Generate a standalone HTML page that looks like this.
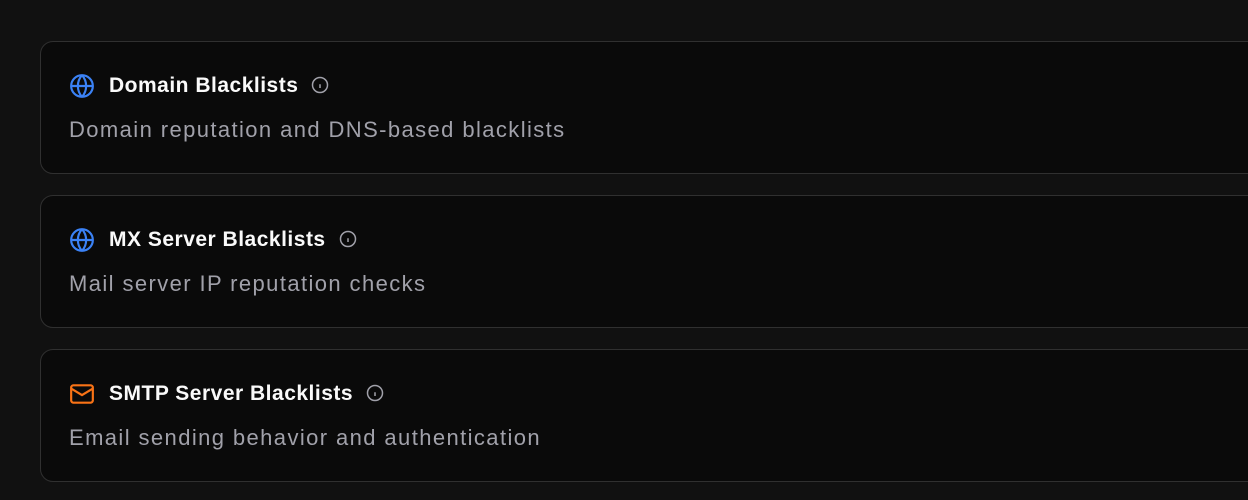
<!DOCTYPE html>
<html><head><style>
html,body{margin:0;padding:0;background:#111111;width:1248px;height:500px;overflow:hidden;font-family:"Liberation Sans",sans-serif;}
.card{position:absolute;left:40px;width:1240px;height:133px;background:#0a0a0a;border:1px solid #303030;border-radius:13px;box-sizing:border-box;}
.ic{position:absolute;left:28px;top:31px;width:26px;height:26px}
.t{position:absolute;left:68px;top:31px;font-size:21px;font-weight:bold;color:#fafafa;letter-spacing:0.5px;line-height:26px;white-space:nowrap}
.t svg{vertical-align:-2px;margin-left:13px}
.d{position:absolute;left:28px;top:75px;font-size:22px;color:#a1a1aa;letter-spacing:1.4px;line-height:26px;white-space:nowrap}
</style></head><body>
<div class="card" style="top:41px">
<svg class="ic" viewBox="0 0 24 24" fill="none" stroke="#3b82f6" stroke-width="2"><circle cx="12" cy="12" r="10"/><path d="M2 12h20M12 2a15 15 0 0 1 0 20M12 2a15 15 0 0 0 0 20"/></svg>
<div class="t">Domain Blacklists<svg width="18" height="18" viewBox="0 0 24 24" fill="none" stroke="#a1a1aa" stroke-width="2"><circle cx="12" cy="12" r="10"/><path d="M12 16v-5M12 8h.01"/></svg></div>
<div class="d">Domain reputation and DNS-based blacklists</div>
</div>
<div class="card" style="top:195px">
<svg class="ic" viewBox="0 0 24 24" fill="none" stroke="#3b82f6" stroke-width="2"><circle cx="12" cy="12" r="10"/><path d="M2 12h20M12 2a15 15 0 0 1 0 20M12 2a15 15 0 0 0 0 20"/></svg>
<div class="t">MX Server Blacklists<svg width="18" height="18" viewBox="0 0 24 24" fill="none" stroke="#a1a1aa" stroke-width="2"><circle cx="12" cy="12" r="10"/><path d="M12 16v-5M12 8h.01"/></svg></div>
<div class="d">Mail server IP reputation checks</div>
</div>
<div class="card" style="top:349px">
<svg class="ic" viewBox="0 0 24 24" fill="none" stroke="#f97316" stroke-width="2"><rect x="2" y="4" width="20" height="16" rx="2"/><path d="M22 7l-10 6L2 7"/></svg>
<div class="t">SMTP Server Blacklists<svg width="18" height="18" viewBox="0 0 24 24" fill="none" stroke="#a1a1aa" stroke-width="2"><circle cx="12" cy="12" r="10"/><path d="M12 16v-5M12 8h.01"/></svg></div>
<div class="d">Email sending behavior and authentication</div>
</div>
</body></html>
